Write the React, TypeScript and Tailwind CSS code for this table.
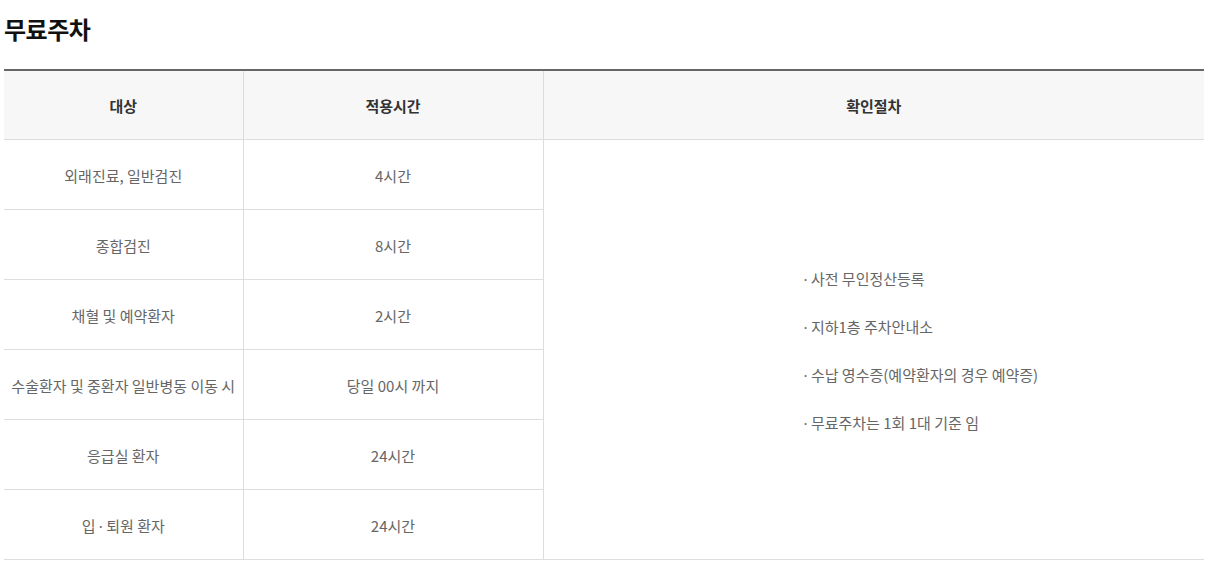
import React from "react";

const Dot = () => (
  <span style={{ fontFamily: '"Noto Sans", sans-serif' }}>·</span>
);

const rows: [React.ReactNode, string][] = [
  ["외래진료, 일반검진", "4시간"],
  ["종합검진", "8시간"],
  ["채혈 및 예약환자", "2시간"],
  ["수술환자 및 중환자 일반병동 이동 시", "당일 00시 까지"],
  ["응급실 환자", "24시간"],
  [
    <>
      입 <Dot /> 퇴원 환자
    </>,
    "24시간",
  ],
];

const notes = [
  "사전 무인정산등록",
  "지하1층 주차안내소",
  "수납 영수증(예약환자의 경우 예약증)",
  "무료주차는 1회 1대 기준 임",
];

export default function App() {
  return (
    <div
      className="bg-white w-[1208px] h-[564px] overflow-hidden px-[4px]"
      style={{ fontFamily: '"Noto Sans CJK KR", "Noto Sans", sans-serif' }}
    >
      <h2 className="pt-[12px] text-[24px] leading-[34px] font-bold text-[#111] tracking-[-0.5px]">
        무료주차
      </h2>
      <table className="mt-[23px] w-[1200px] table-fixed border-collapse border-t-2 border-t-[#666] text-[15px]">
        <colgroup>
          <col className="w-[239px]" />
          <col className="w-[300px]" />
          <col className="w-[661px]" />
        </colgroup>
        <thead>
          <tr className="bg-[#f7f7f7] h-[69px]">
            <th className="border-b border-b-[#ddd] border-r border-r-[#ddd] font-bold text-[#333] text-center p-0 pt-[2px]">
              대상
            </th>
            <th className="border-b border-b-[#ddd] border-r border-r-[#ddd] font-bold text-[#333] text-center p-0 pt-[2px]">
              적용시간
            </th>
            <th className="border-b border-b-[#ddd] font-bold text-[#333] text-center p-0 pt-[2px]">
              확인절차
            </th>
          </tr>
        </thead>
        <tbody>
          {rows.map(([a, b], i) => (
            <tr key={i} className="h-[70px]">
              <td className="border-b border-b-[#ddd] border-r border-r-[#ddd] text-center text-[#666] p-0 pt-[4px]">
                {a}
              </td>
              <td className="border-b border-b-[#ddd] border-r border-r-[#ddd] text-center text-[#666] p-0 pt-[4px]">
                {b}
              </td>
              {i === 0 && (
                <td
                  rowSpan={6}
                  className="border-b border-b-[#ddd] text-left text-[#666] p-0 pt-[4px] pl-[260px] align-middle"
                >
                  <div className="flex flex-col gap-[26px] leading-[22px]">
                    {notes.map((n) => (
                      <div key={n}>
                        <Dot /> {n}
                      </div>
                    ))}
                  </div>
                </td>
              )}
            </tr>
          ))}
        </tbody>
      </table>
    </div>
  );
}
